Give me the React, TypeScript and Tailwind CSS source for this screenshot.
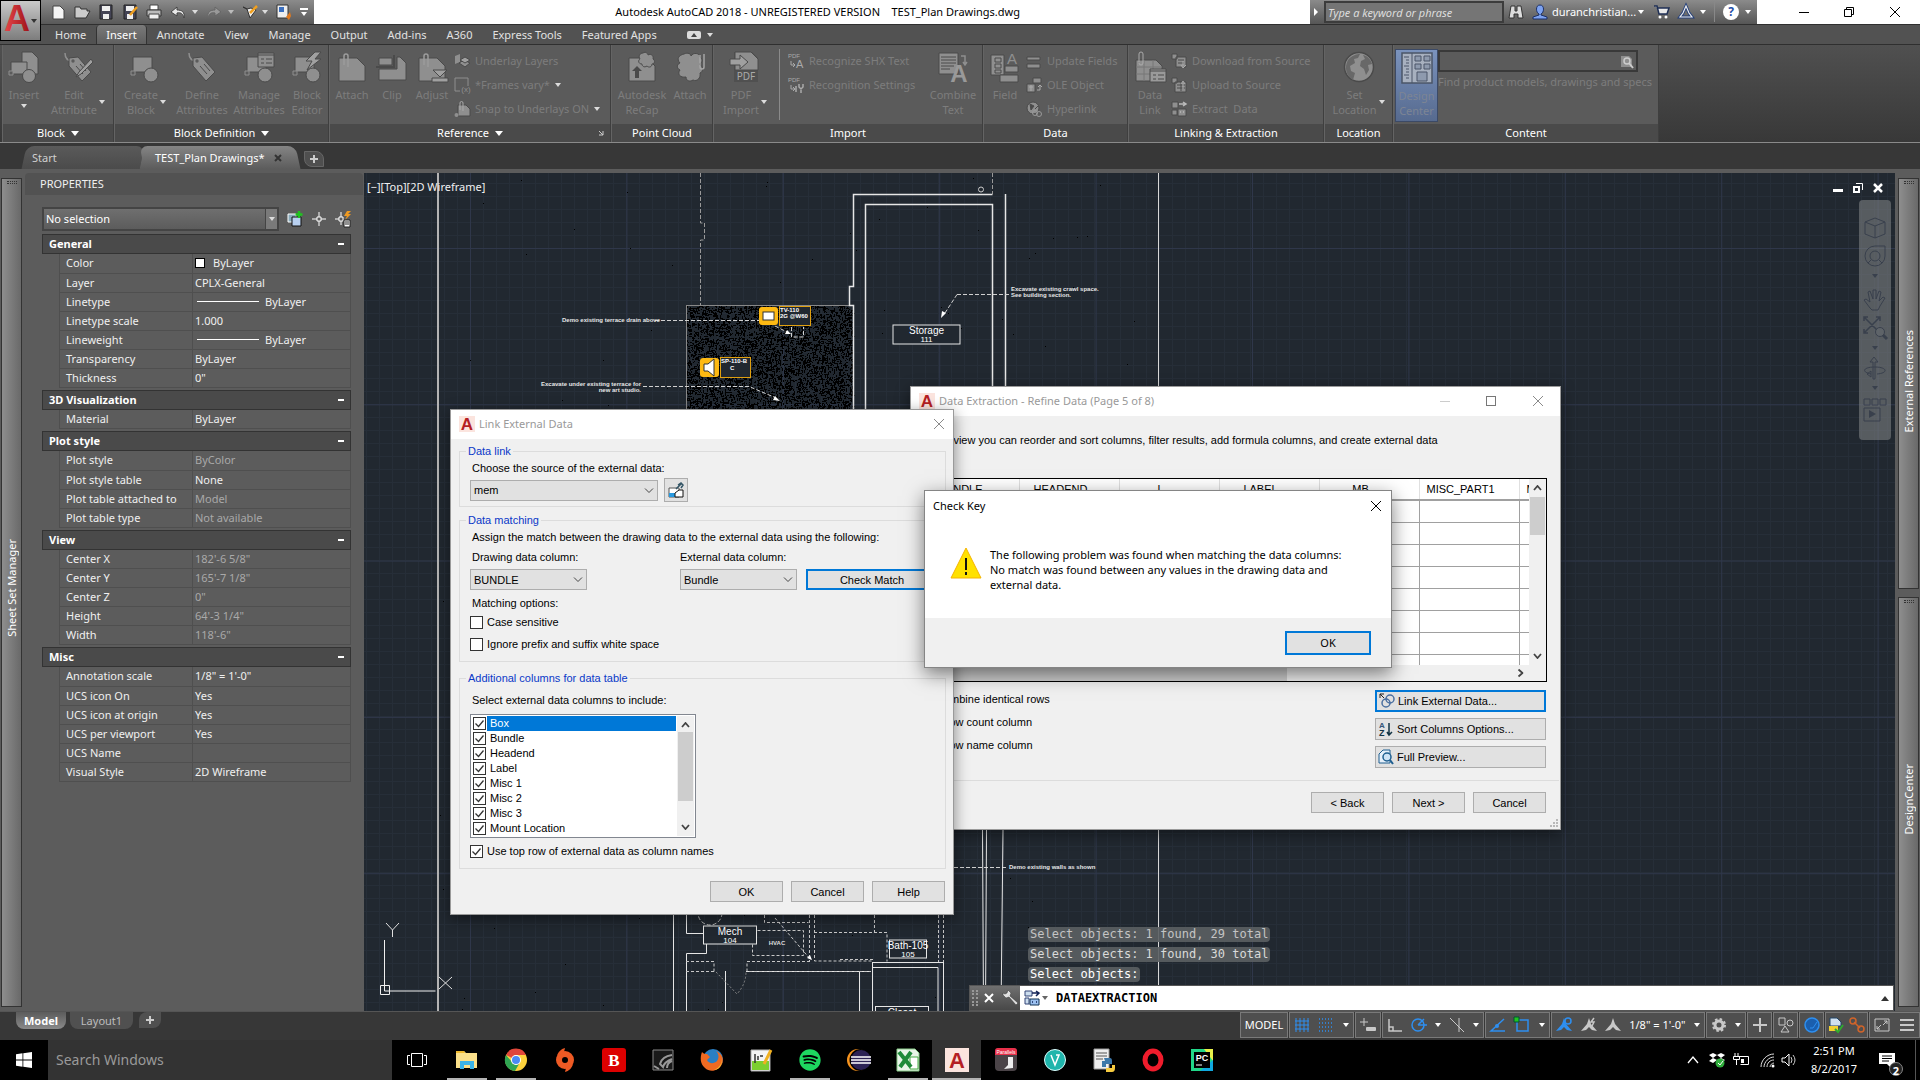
import type { ReactNode } from 'react';
import { FaSpotify } from 'react-icons/fa';

type IconProps = { children: ReactNode; size?: string; box?: string };

const Svg = ({ children, size = 'h-4 w-4', box = '0 0 16 16' }: IconProps) => (
    <svg viewBox={box} className={`${size} shrink-0 overflow-visible`} fill="none" aria-hidden="true">
        {children}
    </svg>
);

const Caret = ({ className = 'text-[#dcdcdc]' }: { className?: string }) => (
    <svg viewBox="0 0 6 4" className={`h-1 w-1.5 shrink-0 ${className}`} aria-hidden="true">
        <path d="M0 0h6L3 4z" fill="currentColor" />
    </svg>
);

const RedA = ({ className = 'h-4 w-4' }: { className?: string }) => (
    <svg viewBox="0 0 16 16" className={`${className} shrink-0 overflow-visible`} aria-hidden="true">
        <rect width="16" height="16" fill="#fbe4de" />
        <text x="8" y="14" textAnchor="middle" fontFamily="Liberation Sans, sans-serif" fontWeight="bold" fontSize="17" fill="#b51f24">A</text>
    </svg>
);

const CloseX = ({ className = 'text-[#8a8a8a]' }: { className?: string }) => (
    <svg viewBox="0 0 12 12" className={`h-3 w-3 ${className}`} aria-hidden="true">
        <path d="M1 1l10 10M11 1L1 11" stroke="currentColor" fill="none" />
    </svg>
);

/* ---------- ribbon icons ---------- */

const F = '#8f8f8f';
const D = '#4a4a4a';

const Tag = () => (
    <g>
        <path d="M3 2c0 6 3 8 8 8" stroke={F} strokeWidth="1.5" />
        <path d="M7 7l9-1 13 15-9 9L7 15z" fill={F} stroke={D} />
        <circle cx="11" cy="10" r="1.7" fill="#5b5b5b" />
        <path d="M14 15l7 8M18 13l6 7" stroke={D} />
    </g>
);

const Shapes = () => (
    <g>
        <path d="M4 6h19v15H4z" fill={F} stroke={D} />
        <path d="M2 20h4v4H2z" fill="#5b5b5b" stroke={F} />
        <circle cx="22" cy="24" r="7" fill={F} stroke={D} />
    </g>
);

const Sheet = () => <path d="M3 7h18l8 8v15H3z" fill={F} stroke={D} />;
const Clip = () => <path d="M8 14V5a2 2 0 014 0v11" stroke="#9c9c9c" strokeWidth="1.5" />;
const Cloud = () => (
    <path d="M10 3c4-2 7 0 7 2 2-4 9-3 9 1 4 3 1 7-1 7 5 3 4 8 1 9 1 5-3 9-7 7-3 2-7 1-7-3-6 1-9-3-6-7-4-2-3-6 0-7-4-4-1-8 4-9z" fill={F} stroke={D} />
);

const bigIcons: Record<string, ReactNode> = {
    insert: <><path d="M14 1h10l6 6v16H14z" fill={F} stroke={D} /><path d="M3 11h16v12H3z" fill={F} stroke={D} /><path d="M1 20h4v4H1z" fill="#5b5b5b" stroke={F} /><circle cx="21" cy="25" r="6.5" fill={F} stroke={D} /></>,
    editAttr: <><Tag /><path d="M29 8l-12 13-3 5 5-3L31 11z" fill="#a0a0a0" stroke={D} /></>,
    create: <Shapes />,
    define: <Tag />,
    manage: <><Shapes /><path d="M15 2h16v14H15z" fill={F} stroke={D} /><path d="M15 4h16M18 8h3M18 12h3M23 8h6M23 12h6" stroke={D} /></>,
    editor: <><Shapes /><path d="M24 1l-9 9h6l-5 9 14-11h-6l6-7z" fill="#a0a0a0" stroke={D} /></>,
    attach: <><Sheet /><Clip /></>,
    clip: <><path d="M3 18h18V6h3l6 6v17H3z" fill={F} stroke={D} /><path d="M3 7h13v7H3z" fill={F} stroke={D} /><path d="M0 16h18V4" stroke={D} strokeWidth="2" /></>,
    adjust: <><Sheet /><Clip /><path d="M17 19h14l-7 7zM16 27h16v4H16z" fill="#a0a0a0" stroke={D} /></>,
    recap: <><Sheet /><path d="M17 2c3-2 5 1 5 2 3-2 6 1 5 4 3 2 1 5-1 5 0 3-3 4-5 2-3 2-5 0-5-2-4 0-4-4-2-5-2-3 0-6 3-6z" fill={F} stroke={D} /><path d="M9 27v-7H6l5-5 5 5h-3v7z" fill={D} /></>,
    cloud: <><Cloud /><path d="M26 4v12a2 2 0 004 0V3" stroke="#a5a5a5" strokeWidth="1.5" /></>,
    pdf: <><path d="M5 1h18l6 6v24H5z" fill="#505050" /><path d="M6 1h16l7 7v11H6z" fill={F} stroke={D} /><path d="M1 8h10V4l8 7-8 7v-4H1z" fill="#a0a0a0" stroke={D} /><text x="17" y="29" textAnchor="middle" fontSize="10" fontFamily="Noto Sans, sans-serif" fill="#aaa">PDF</text></>,
    combine: <><path d="M2 2h19v21H2z" fill={F} stroke={D} /><path d="M4 6h15M4 9h15M4 12h15M4 15h13M4 18h9" stroke={D} /><path d="M24 5h4v8M26 11l2 3 2-3" stroke={F} strokeWidth="1.5" /><text x="22" y="31" textAnchor="middle" fontSize="24" fontWeight="bold" fontFamily="Liberation Sans, sans-serif" fill="#999">A</text></>,
    field: <><path d="M2 4h13v20H2z" fill={F} stroke={D} /><path d="M6 7h6v4H6zM6 13h6v4H6zM6 19h6v3H6z" stroke={D} /><path d="M16 15h13v6H16zM11 24h18v7H11z" fill={F} stroke={D} /><text x="23" y="13" textAnchor="middle" fontSize="15" fontFamily="Liberation Sans, sans-serif" fill={F}>A</text></>,
    link: <><path d="M2 9h20l6 6v15H2z" fill={F} stroke={D} /><path d="M2 16h26M2 23h26M10 9v21M19 9v21" stroke="#777" /><path d="M16 18h16v13H16z" fill="#9a9a9a" stroke={D} /><path d="M16 20h16M19 24h3M19 28h3M24 24h6M24 28h6" stroke={D} /><path d="M5 11V3a2 2 0 014 0v9a2 2 0 01-4 0" stroke="#aaa" /></>,
    globe: <><circle cx="16" cy="16" r="14.5" fill={F} stroke={D} strokeWidth="1.5" /><path d="M5 9c4-5 9-6 12-6l-2 4-4 1 1 4-5 3 1 5 4 2-2 7C3 25 1 16 5 9zM20 4c5 1 8 5 9 9l-4 1 1 5-3 5-2-6-4-3 1-5 4-2z" fill="#686868" /></>,
    design: <><path d="M1 1h30v30H1z" fill="#a7b0bf" stroke="#4b5568" strokeWidth="1.5" /><path d="M11 1v30M3 5h5M5 8h3M5 11h3M3 14h5M5 17h3M5 20h3M3 23h5M5 26h3" stroke="#4b5568" /><path d="M14 4h6v5h-6zM23 4h6v5h-6zM14 12h6v5h-6zM23 12h6v5h-6zM16 20h10v9H16z" stroke="#4b5568" fill="#8e9aae" /></>,
};

const smallIcons: Record<string, ReactNode> = {
    layers: <><path d="M1 3l5-2v8l-5 2z" fill={F} /><path d="M5 10l5-3 6 3-5 4z" fill={F} stroke={D} /><path d="M6 7l5-3 5 3-5 3z" fill="#a0a0a0" stroke={D} /></>,
    frames: <><path d="M6 14H1V1h13v8" stroke={F} /><text x="12" y="15" textAnchor="middle" fontSize="8" fontFamily="Liberation Sans, sans-serif" fill={F}>(x)</text></>,
    snap: <><path d="M4 4h8l4 4v7H4z" fill={F} stroke={D} /><path d="M6 9V2a1 1 0 013 0v8" stroke="#aaa" /><circle cx="2.5" cy="14" r="2" fill={F} /></>,
    shx: <><text x="0" y="5" fontSize="6" fontFamily="Liberation Sans, sans-serif" fill="#aaa">PDF</text><path d="M3 8v4h3M5 10l2 2-2 2" stroke="#aaa" /><text x="8" y="15" fontSize="11" fontFamily="Liberation Sans, sans-serif" fill="#aaa">A</text></>,
    recog: <><text x="0" y="5" fontSize="6" fontFamily="Liberation Sans, sans-serif" fill="#aaa">PDF</text><path d="M3 8v4h3M5 10l2 2-2 2" stroke="#aaa" /><path d="M8 15V9M13 16v-5M11 7v3l2 2 2-2V7" stroke="#aaa" strokeWidth="1.5" /></>,
    update: <path d="M1 4h13v3H1zM1 11h13v4H1z" fill={F} stroke={D} />,
    ole: <><path d="M7 1h8v5H7zM1 7h8v8H1z" fill={F} stroke={D} /><path d="M3 10h4M5 8v6M11 13h3V9M12 10l2-2 2 2" stroke="#aaa" /></>,
    hyper: <><circle cx="7" cy="7" r="6" fill={F} stroke={D} /><path d="M4 3l4 2-3 4zM9 8l3-3" fill={D} stroke={D} /><circle cx="9" cy="12" r="2.5" stroke="#999" /><circle cx="13" cy="13" r="2.5" stroke="#999" /></>,
    down: <><path d="M1 1h5v5H1zM5 4h10v10H5z" fill={F} stroke={D} /><path d="M7 7h6M7 10h6" stroke={D} /><path d="M12 8v6M10 12l2 3 3-3" stroke="#aaa" /></>,
    up: <><path d="M1 1h5v5H1zM4 5h11v10H4z" fill={F} stroke={D} /><path d="M6 8h8M6 11h8M10 4v10" stroke={D} /><path d="M12 12V5M10 7l2-3 2 3" stroke="#aaa" /></>,
    extract: <><path d="M1 1h6v6H1zM1 9h5v5H1zM7 8h8v7H7z" fill={F} stroke={D} /><path d="M9 11h1M12 11h1M8 3h6M12 1l3 2-3 2" stroke="#bbb" strokeWidth="1.5" /></>,
};

type BigProps = { icon: string; lines: string[]; width: string; caret?: boolean; tone?: string };

const BigButton = ({ icon, lines, width, caret, tone = 'text-[#7d7d7d]' }: BigProps) => (
    <button type="button" className={`flex shrink-0 flex-col items-center pt-1.5 ${width} ${tone}`}>
        <Svg box="0 0 32 32" size="h-8 w-8">{bigIcons[icon]}</Svg>
        <span className={`mt-1 flex items-center justify-center gap-0.5 ${lines.length === 1 ? 'flex-col' : ''}`}>
            <span className="flex flex-col items-center leading-[15px] whitespace-nowrap">
                {lines.map((l) => <span key={l}>{l}</span>)}
            </span>
            {caret && <Caret />}
        </span>
    </button>
);

const SmallRows = ({ rows }: { rows: [string, string, boolean?][] }) => (
    <div className="flex flex-col pt-1 text-[#7d7d7d]">
        {rows.map(([icon, label, caret]) => (
            <button key={label} type="button" className="flex h-6 items-center gap-[5px] whitespace-pre">
                <Svg>{smallIcons[icon]}</Svg>
                {label}
                {caret && <Caret />}
            </button>
        ))}
    </div>
);

type PanelProps = { title: string; width: string; more?: boolean; launcher?: boolean; children: ReactNode };

const Panel = ({ title, width, more, launcher, children }: PanelProps) => (
    <section className={`flex shrink-0 flex-col border-r border-[#3f3f3f] ${width}`}>
        <div className="flex h-[79px] border-l border-[#646464] bg-[#5b5b5b]">{children}</div>
        <h2 className="relative flex h-[18px] items-center justify-center gap-1.5 border-l border-[#646464] bg-[#4a4a4a] text-white">
            {title}
            {more && <svg viewBox="0 0 8 5" className="h-[5px] w-2"><path d="M0 0h8L4 5z" fill="#fff" /></svg>}
            {launcher && <svg viewBox="0 0 6 6" className="absolute right-1.5 h-1.5 w-1.5"><path d="M1 1l4 4M5 1v4H1" stroke="#ccc" fill="none" /></svg>}
        </h2>
    </section>
);

/* ---------- title bar ---------- */

const quickAccess: [string, ReactNode][] = [
    ['New', <path key="n" d="M3 2h7l4 4v9H3z" fill="#f4f4f4" stroke="#444" />],
    ['Open', <path key="o" d="M1 14V3h5l1 2h6v2h3l-4 7z" fill="#ccc" stroke="#333" />],
    ['Save', <><path d="M2 1h12v14H2z" fill="#445" stroke="#222" /><path d="M4 2h8v5H4zM5 10h6v5H5z" fill="#eee" /></>],
    ['Save As', <><path d="M2 1h12v14H2z" fill="#445" stroke="#222" /><path d="M4 2h8v5H4zM5 10h6v5H5z" fill="#eee" /><path d="M15 3l-7 8" stroke="#f0a020" strokeWidth="2.5" /></>],
    ['Plot', <><path d="M4 1h8v5H4z" fill="#fff" stroke="#444" /><path d="M1 6h14v6H1z" fill="#bbb" stroke="#333" /><path d="M3 10h10v5H3z" fill="#eee" stroke="#444" /></>],
];

const TitleBar = () => (
    <header className="flex h-6 bg-white pl-[41px] text-[11px]">
        <div className="flex w-[273px] items-center gap-2 bg-linear-to-b from-[#8b8b8b] to-[#595959] pl-[9px]">
            {quickAccess.map(([name, art]) => (
                <button key={name} type="button" aria-label={name}><Svg>{art}</Svg></button>
            ))}
            <button type="button" aria-label="Undo" className="flex items-center gap-1.5">
                <Svg><path d="M7 3L1 8l6 4V9c4-1 6 1 7 5 1-6-2-8-7-8z" fill="#e8e8e8" stroke="#444" /></Svg>
                <Caret />
            </button>
            <button type="button" aria-label="Redo" className="flex items-center gap-1.5">
                <Svg><path d="M9 3l6 5-6 4V9c-4-1-6 1-7 5-1-6 2-8 7-8z" fill="#999" stroke="#666" /></Svg>
                <Caret className="text-[#bbb]" />
            </button>
            <button type="button" aria-label="Workspace" className="flex items-center gap-1">
                <Svg><path d="M1 3l4 2 3 9 6-8-5-2-4 1z" fill="#eee" stroke="#333" /><path d="M15 2L8 9" stroke="#f0a020" strokeWidth="2.5" /></Svg>
                <Caret />
            </button>
            <button type="button" aria-label="Match properties">
                <Svg><path d="M1 1h11v13H1z" fill="#eee" stroke="#333" /><path d="M3 3h5v5H3z" fill="#3a6fc0" /><path d="M14 8l-4 5 3 3 2-4z" fill="#e07a20" /></Svg>
            </button>
            <button type="button" aria-label="Customize" className="flex flex-col items-center gap-0.5">
                <span className="h-0.5 w-2 bg-white" /><Caret className="text-white" />
            </button>
        </div>
        <h1 className="flex-1 self-center pr-[68px] text-right whitespace-pre text-black">
            {'Autodesk AutoCAD 2018 - UNREGISTERED VERSION    TEST_Plan Drawings.dwg'}
        </h1>
        <div className="ml-[222px] flex w-[447px] items-center bg-linear-to-b from-[#8b8b8b] to-[#565656] pl-1 text-white">
            <svg viewBox="0 0 4 8" className="mr-1.5 h-2 w-1"><path d="M0 0l4 4-4 4z" fill="#fff" /></svg>
            <input aria-label="Search" placeholder="Type a keyword or phrase" className="h-[22px] w-[180px] border-2 border-[#3c3c3c] bg-[#757575] px-0.5 italic placeholder:text-[#dedede]" />
            <Svg size="ml-1 h-4 w-4"><path d="M3 2h4v5h2V2h4l2 12h-5v-4H6v4H1z" fill="#ddd" stroke="#333" /></Svg>
            <Svg size="ml-2 h-4 w-4"><path d="M8 1c5 0 4 8 1 9v1l6 2v2H1v-2l6-2v-1C4 9 3 1 8 1z" fill="#7da2f0" stroke="#1b2f66" /></Svg>
            <a href="#account" className="ml-1 flex items-center gap-0.5">duranchristian...<Caret className="text-white" /></a>
            <Svg size="ml-auto h-4 w-4"><path d="M0 2h3l2 8h8l2-6H4" fill="#e8e8e8" stroke="#1f2f55" strokeWidth="1.5" /><circle cx="6" cy="13" r="1.5" fill="#fff" /><circle cx="12" cy="13" r="1.5" fill="#fff" /></Svg>
            <Svg size="ml-2 h-4 w-4"><path d="M8 2l3 7 3 4H2l3-4z" stroke="#24407c" strokeWidth="3" /><path d="M8 2l3 7 3 4H2l3-4z" stroke="#eee" strokeWidth="1.2" /></Svg>
            <span className="ml-1.5"><Caret className="text-white" /></span>
            <span className="mx-2 h-5 w-px bg-[#888]" />
            <span className="grid h-4 w-4 place-items-center rounded-full bg-white text-xs font-bold text-[#1f4ea8]">?</span>
            <span className="mx-1.5"><Caret className="text-white" /></span>
        </div>
        <div className="flex w-[163px] items-center justify-between pr-[19px] pl-[42px]">
            <button type="button" aria-label="Minimize" className="h-px w-2.5 bg-black" />
            <button type="button" aria-label="Restore"><svg viewBox="0 0 10 10" className="h-2.5 w-2.5" fill="none" stroke="#000"><path d="M.5 2.5h7v7h-7zM2.5 2.5v-2h7v7h-2" /></svg></button>
            <button type="button" aria-label="Close"><CloseX className="text-black" /></button>
        </div>
    </header>
);

const tabs = ['Home', 'Insert', 'Annotate', 'View', 'Manage', 'Output', 'Add-ins', 'A360', 'Express Tools', 'Featured Apps'];

const Ribbon = () => (
    <div className="text-[11px]">
        <nav className="flex h-[21px] items-stretch border-y border-[#2f2f2f] bg-[#525252] pl-[45px]">
            {tabs.map((t) => (
                <a
                    key={t}
                    href={`#${t}`}
                    className={`flex items-center border-x px-[9px] ${t === 'Insert' ? 'rounded-t-sm border-[#333] bg-linear-to-b from-[#7a7a7a] to-[#5f5f5f] text-white' : 'border-transparent text-[#e2e2e2]'}`}
                >
                    {t}
                </a>
            ))}
            <button type="button" aria-label="Ribbon display" className="ml-5 flex items-center gap-1.5">
                <svg viewBox="0 0 14 8" className="h-2 w-3.5"><rect width="14" height="8" rx="2" fill="#dcdcdc" /><path d="M4 6l3-4 3 4z" fill="#444" /></svg>
                <Caret />
            </button>
        </nav>
        <div className="flex h-[98px] border-b border-[#8a8a8a] bg-linear-to-b from-[#505050] to-[#383838] pl-0.5">
            <Panel title="Block" width="w-[112px]" more>
                <BigButton icon="insert" lines={['Insert']} width="w-[42px]" caret />
                <BigButton icon="editAttr" lines={['Edit', 'Attribute']} width="w-[66px]" caret />
            </Panel>
            <Panel title="Block Definition" width="w-[215px]" more>
                <BigButton icon="create" lines={['Create', 'Block']} width="w-[60px]" caret />
                <BigButton icon="define" lines={['Define', 'Attributes']} width="w-[54px]" />
                <BigButton icon="manage" lines={['Manage', 'Attributes']} width="w-[60px]" />
                <BigButton icon="editor" lines={['Block', 'Editor']} width="w-9" />
            </Panel>
            <Panel title="Reference" width="w-[282px]" more launcher>
                <BigButton icon="attach" lines={['Attach']} width="w-11" />
                <BigButton icon="clip" lines={['Clip']} width="w-9" />
                <BigButton icon="adjust" lines={['Adjust']} width="w-11" />
                <SmallRows rows={[['layers', 'Underlay Layers'], ['frames', '*Frames vary*', true], ['snap', 'Snap to Underlays ON', true]]} />
            </Panel>
            <Panel title="Point Cloud" width="w-[102px]">
                <BigButton icon="recap" lines={['Autodesk', 'ReCap']} width="w-[60px]" />
                <BigButton icon="cloud" lines={['Attach']} width="w-9" />
            </Panel>
            <Panel title="Import" width="w-[270px]">
                <BigButton icon="pdf" lines={['PDF', 'Import']} width="w-[62px]" caret />
                <span className="mx-[3px] my-1 mr-2 w-px shrink-0 bg-[#8a8a8a]" />
                <SmallRows rows={[['shx', 'Recognize SHX Text'], ['recog', 'Recognition Settings']]} />
                <div className="ml-auto"><BigButton icon="combine" lines={['Combine', 'Text']} width="w-[58px]" /></div>
            </Panel>
            <Panel title="Data" width="w-[145px]">
                <BigButton icon="field" lines={['Field']} width="w-[42px]" />
                <SmallRows rows={[['update', 'Update Fields'], ['ole', 'OLE Object'], ['hyper', 'Hyperlink']]} />
            </Panel>
            <Panel title="Linking & Extraction" width="w-[196px]">
                <BigButton icon="link" lines={['Data', 'Link']} width="w-[42px]" />
                <SmallRows rows={[['down', 'Download from Source'], ['up', 'Upload to Source'], ['extract', 'Extract  Data']]} />
            </Panel>
            <Panel title="Location" width="w-[69px]">
                <BigButton icon="globe" lines={['Set', 'Location']} width="w-[67px]" caret />
            </Panel>
            <Panel title="Content" width="w-[266px]">
                <div className="mt-1 mb-0.5 ml-px flex h-[73px] w-[43px] shrink-0 justify-center border border-[#3c4a66] bg-linear-to-b from-[#7b93bd] to-[#566a8f]">
                    <div className="-mt-1"><BigButton icon="design" lines={['Design', 'Center']} width="w-10" tone="text-[#7d8594]" /></div>
                </div>
                <div className="flex flex-col pt-[5px]">
                    <div className="flex h-[22px] w-[200px] items-center border-2 border-[#393939] pr-0.5">
                        <input aria-label="Find content" className="min-w-0 flex-1 bg-transparent" />
                        <Svg><path d="M3 3h8l3 3v8H3z" fill="#8f8f8f" /><circle cx="9" cy="8" r="3" stroke="#ccc" strokeWidth="1.5" /><path d="M11 10l4 5" stroke="#ccc" strokeWidth="2" /></Svg>
                    </div>
                    <p className="pt-0.5 whitespace-nowrap text-[#7d7d7d]">Find product models, drawings and specs</p>
                </div>
            </Panel>
        </div>
    </div>
);

const FileTabs = () => (
    <div className="flex h-[30px] items-end border-b-4 border-[#5c5c5c] bg-[#373737] pl-6 text-[11px]">
        <a href="#start" className="relative isolate flex h-[23px] w-[118px] items-center pl-2 text-[#cfcfcf] before:absolute before:inset-0 before:-z-10 before:-skew-x-12 before:rounded-t-lg before:bg-linear-to-b before:from-[#5a5a5a] before:to-[#4b4b4b]">Start</a>
        <a href="#drawing" className="relative isolate flex h-[23px] w-[156px] items-center justify-between pr-4 pl-[13px] text-white before:absolute before:inset-0 before:-z-10 before:skew-x-12 before:rounded-t-lg before:bg-linear-to-b before:from-[#858585] before:to-[#5c5c5c] after:absolute after:inset-y-0 after:left-0 after:-z-10 after:w-10 after:-skew-x-12 after:rounded-tl-lg after:bg-linear-to-b after:from-[#858585] after:to-[#5c5c5c]">
            TEST_Plan Drawings*
            <svg viewBox="0 0 8 8" className="h-2 w-2"><path d="M1 1l6 6M7 1L1 7" stroke="#333" strokeWidth="2" /></svg>
        </a>
        <button type="button" aria-label="New tab" className="mb-0.5 ml-1.5 grid h-4 w-5 place-items-center rounded-tr-lg rounded-bl-lg border border-[#666] bg-[#4f4f4f]">
            <svg viewBox="0 0 8 8" className="h-2 w-2"><path d="M4 0v8M0 4h8" stroke="#ccc" strokeWidth="2" /></svg>
        </button>
    </div>
);

/* ---------- palettes ---------- */

const SideBar = ({ label, className }: { label: string; className: string }) => (
    <div className={`flex w-[21px] flex-col items-center border border-[#333] bg-linear-to-r from-[#8e8e8e] to-[#696969] text-[11px] text-white ${className}`}>
        <span className="mt-0.5 h-[3px] w-2.5 border-y border-dotted border-[#333]" />
        <span className="rotate-180 [writing-mode:vertical-rl]">{label}</span>
    </div>
);

type Row = { name: string; value: string; dim?: boolean; mark?: 'swatch' | 'line' };

const sections: { title: string; rows: Row[] }[] = [
    {
        title: 'General',
        rows: [
            { name: 'Color', value: 'ByLayer', mark: 'swatch' },
            { name: 'Layer', value: 'CPLX-General' },
            { name: 'Linetype', value: 'ByLayer', mark: 'line' },
            { name: 'Linetype scale', value: '1.000' },
            { name: 'Lineweight', value: 'ByLayer', mark: 'line' },
            { name: 'Transparency', value: 'ByLayer' },
            { name: 'Thickness', value: '0"' },
        ],
    },
    { title: '3D Visualization', rows: [{ name: 'Material', value: 'ByLayer' }] },
    {
        title: 'Plot style',
        rows: [
            { name: 'Plot style', value: 'ByColor', dim: true },
            { name: 'Plot style table', value: 'None' },
            { name: 'Plot table attached to', value: 'Model', dim: true },
            { name: 'Plot table type', value: 'Not available', dim: true },
        ],
    },
    {
        title: 'View',
        rows: [
            { name: 'Center X', value: '182\'-6 5/8"', dim: true },
            { name: 'Center Y', value: '165\'-7 1/8"', dim: true },
            { name: 'Center Z', value: '0"', dim: true },
            { name: 'Height', value: '64\'-3 1/4"', dim: true },
            { name: 'Width', value: '118\'-6"', dim: true },
        ],
    },
    {
        title: 'Misc',
        rows: [
            { name: 'Annotation scale', value: '1/8" = 1\'-0"' },
            { name: 'UCS icon On', value: 'Yes' },
            { name: 'UCS icon at origin', value: 'Yes' },
            { name: 'UCS per viewport', value: 'Yes' },
            { name: 'UCS Name', value: '' },
            { name: 'Visual Style', value: '2D Wireframe' },
        ],
    },
];

const Properties = () => (
    <aside className="flex w-[338px] shrink-0 flex-col text-[11px] text-[#f0f0f0]">
        <h2 className="flex h-[22px] items-center rounded-t bg-[#525252] pl-[15px] leading-4">PROPERTIES</h2>
        <div className="mt-3 flex items-center pl-[17px]">
            <div className="relative h-6 w-[237px]">
                <select aria-label="Selection" className="h-6 w-full appearance-none border-2 border-[#444] bg-linear-to-b from-[#6f6f6f] to-[#5c5c5c] pl-0.5 text-[11px] text-white">
                    <option>No selection</option>
                </select>
                <span className="pointer-events-none absolute inset-y-0.5 right-0.5 grid w-3 place-items-center border-l border-[#444] bg-[#7a7a7a]"><Caret /></span>
            </div>
            <button type="button" aria-label="Toggle pickadd" className="ml-2"><Svg><path d="M1 3h8v8H1z" fill="#8ab" stroke="#fff" /><path d="M5 6h9v9H5z" fill="#b8d0f0" stroke="#111" /><path d="M12 0v7M8.500 3.500h7" stroke="#1fc41f" strokeWidth="2.5" /></Svg></button>
            <button type="button" aria-label="Select objects" className="ml-2"><Svg><path d="M8 1v5M8 10v5M1 8h5M10 8h5M6 6h4v4H6z" stroke="#fff" /></Svg></button>
            <button type="button" aria-label="Quick select" className="ml-2"><Svg><path d="M6 1v5M6 10v4M0 8h4M4 6h4v4H4z" stroke="#fff" /><path d="M12 0l-3 5h3l-2 4 6-6h-3l3-3z" fill="#f09a20" /><path d="M9 9h6v7H9z" fill="#fff" stroke="#222" /><path d="M10 11h4M10 13h4" stroke="#222" /></Svg></button>
        </div>
        <div className="mt-[3px] flex flex-col gap-0.5 pl-[17px]">
            {sections.map((s) => (
                <section key={s.title} className="w-[309px]">
                    <h3 className="flex h-5 items-center justify-between border border-[#333] bg-[#4a4a4a] px-1.5 text-[11px] font-bold text-white">
                        {s.title}
                        <span className="h-0.5 w-1.5 bg-white" />
                    </h3>
                    <table className="ml-[17px] w-[292px] table-fixed border-collapse text-[11px]">
                        <tbody>
                            {s.rows.map((r) => (
                                <tr key={r.name} className="h-[19px]">
                                    <th scope="row" className="w-[133px] border border-t-0 border-[#4f4f4f] p-0 pl-1.5 text-left leading-[18px] font-normal">{r.name}</th>
                                    <td className={`border border-t-0 border-[#4f4f4f] p-0 pl-0.5 leading-[18px] ${r.dim ? 'text-[#a9a9a9]' : ''}`}>
                                        <span className="flex h-[18px] items-center">
                                            {r.mark === 'swatch' && <span className="mr-2 h-2.5 w-2.5 border border-black bg-white" />}
                                            {r.mark === 'line' && <span className="mr-1.5 ml-0.5 h-px w-[62px] bg-white" />}
                                            {r.value}
                                        </span>
                                    </td>
                                </tr>
                            ))}
                        </tbody>
                    </table>
                </section>
            ))}
        </div>
    </aside>
);

/* ---------- drawing ---------- */

// small seeded generator so the hatch looks the same on every render
const speckle = (seed: number, count: number, x: number, y: number, w: number, h: number, long = false) => {
    let s = seed;
    const next = () => {
        s = (s * 16807) % 2147483647;
        return s / 2147483647;
    };
    let d = '';
    for (let i = 0; i < count; i++) {
        const px = Math.floor(x + next() * w);
        const py = Math.floor(y + next() * h);
        const len = long ? 1 + Math.floor(next() * 3) : 1;
        d += next() > 0.5 ? `M${px} ${py}h${len}v1h-${len}z` : `M${px} ${py}h1v${len}h-1z`;
    }
    return d;
};

const hatch = speckle(7, 5200, 687, 306, 166, 110, true);
const dust = speckle(21, 160, 440, 175, 700, 840);

const Note = ({ x, y, children, end }: { x: number; y: number; children: string; end?: boolean }) => (
    <text x={x} y={y} fontSize="6" fontWeight="bold" fill="#e6e6e6" textAnchor={end ? 'end' : 'start'}>{children}</text>
);

const RoomTag = ({ x, y, w, h, name, no }: { x: number; y: number; w: number; h: number; name: string; no: string }) => (
    <g>
        <rect x={x} y={y} width={w} height={h} fill="#212830" stroke="#e6e6e6" />
        <text x={x + w / 2} y={y + 9} fontSize="10" textAnchor="middle" fill="#fff">{name}</text>
        <text x={x + w / 2} y={y + 17} fontSize="8" textAnchor="middle" fill="#fff">{no}</text>
    </g>
);

const Plan = () => (
    <svg className="absolute inset-0 h-full w-full" fontFamily="Liberation Sans, sans-serif" fill="none">
        <defs>
            <pattern id="minor" width="13" height="13" x="2" y="10" patternUnits="userSpaceOnUse"><path d="M.5 0v13M0 .5h13" stroke="#262e38" /></pattern>
            <pattern id="major" width="156.400" height="156.300" x="106" y="75" patternUnits="userSpaceOnUse"><path d="M.5 0v157M0 .5h157" stroke="#2f374a" /></pattern>
        </defs>
        <rect width="100%" height="100%" fill="#212830" />
        <rect width="100%" height="100%" fill="url(#minor)" />
        <rect width="100%" height="100%" fill="url(#major)" />
        <g transform="translate(-364 -173)">
            <path d={dust} fill="#000" />
            <path d="M438 173v840" stroke="#b4b4b4" strokeWidth="2" />
            <path d="M1158.500 173v840" stroke="#d8d8d8" />
            <path d="M700.500 173v50h4v17h-4v65M992.500 173v21" stroke="#999" strokeDasharray="4 2" />
            <rect x="686.500" y="305.500" width="167" height="120" stroke="#888" />
            <path d={hatch} fill="#000" />
            <path d="M853.500 420V305.500h-4V286.500h4V194.500h139M865.500 420V204.500h127V420M1005.500 194v240" stroke="#e6e6e6" strokeWidth="1.5" />
            <circle cx="981" cy="189.500" r="2.500" stroke="#ccc" />
            <path d="M655 320.500h104M643 386.500h106l26 11M957 294.500h53M957 294.500l-13 20M775 326l12 6M791.500 327v10h12v-10M954 867.500h53" stroke="#d0d0d0" strokeDasharray="4 2" />
            <path d="M780 401l-7-1 2-4zM941 318l1-7 4 2zM791 334l-6 0 2-4z" fill="#fff" />
            <Note x={562} y={322}>Demo existing terrace drain above</Note>
            <Note x={641} y={386} end>Excavate under existing terrace for</Note>
            <Note x={641} y={392} end>new art studio.</Note>
            <Note x={1011} y={291}>Excavate existing crawl space.</Note>
            <Note x={1011} y={297}>See building section.</Note>
            <Note x={1009} y={869}>Demo existing walls as shown</Note>
            <RoomTag x={893} y={325} w={67} h={19} name="Storage" no="111" />

            <rect x="759" y="307" width="19" height="18" rx="3" fill="#fdb913" />
            <rect x="763" y="312" width="11" height="8" fill="#fff" stroke="#333" />
            <rect x="779.500" y="306.500" width="31" height="19" fill="#212830" stroke="#e0a010" />
            <text x="780" y="312" fontSize="6" fontWeight="bold" fill="#fff">TV-110</text>
            <text x="780" y="318" fontSize="6" fontWeight="bold" fill="#fff">2G @W60</text>
            <rect x="700" y="358" width="19" height="19" rx="3" fill="#fdb913" />
            <path d="M704 364h4l6-5v17l-6-5h-4z" fill="#fff" stroke="#333" />
            <rect x="720.500" y="357.500" width="30" height="20" fill="#212830" stroke="#e0a010" />
            <text x="721" y="363" fontSize="6" fontWeight="bold" fill="#fff">SP-110-B</text>
            <text x="730" y="370" fontSize="6" fontWeight="bold" fill="#fff">C</text>

            <path d="M673.500 900v112M686.500 900v33.500h17M706.500 944v9.500h-20V1012M725.500 971v41M746 971.500h125M859.500 972v40M872.500 1012V962.500M872 962.500h71M872 967.500h66V1012M943.500 962v50M982.500 829l1 183M986.500 829l-1 183M1003 829l-2 183" stroke="#e6e6e6" />
            <path d="M764.500 900v22.500h44M752.500 930.500h51v25h-51zM809.500 900v61M814.500 900v61h58M686 961.500h28v10M686 971.500h28M810 961.500h-63v10h124M814 932.500h73v29M874.500 900v32M938.500 900v62M943.500 900v62M775 918l36 42M840 959.500h35" stroke="#c8c8c8" strokeDasharray="3 2" />
            <path d="M716 972l21 22q9-10 9-22" stroke="#888" strokeDasharray="2 2" />
            <circle cx="710" cy="913" r="12" stroke="#bbb" strokeDasharray="4 2" />
            <path d="M812 960l-5-2 3-3z" fill="#fff" />
            <text x="777" y="945" fontSize="6" fontWeight="bold" textAnchor="middle" fill="#ddd">HVAC</text>
            <RoomTag x={703.5} y={926} w={53} h={18} name="Mech" no="104" />
            <RoomTag x={889.5} y={940} w={37} h={18} name="Bath-105" no="105" />
            <RoomTag x={875.5} y={1006.5} w={53} h={18} name="Closet" no="107" />

            <path d="M384.500 940v51h51M380.500 985.500h9v9h-9z" stroke="#f0f0f0" />
            <path d="M386 923l6.500 7 6.500-7M392.500 930v7M439 977l13 12M452 977l-13 12" stroke="#e0e0e0" />
        </g>
    </svg>
);

const NavBar = () => (
    <div className="absolute top-[27px] right-1 flex h-60 w-8 flex-col items-center rounded bg-[#85898b]/60 pt-4 text-[#3c4350] opacity-90">
        <Svg box="0 0 24 24" size="h-6 w-6"><path d="M2 6l10-4 10 4v12l-10 4-10-4zM2 6l10 4 10-4M12 10v12" stroke="currentColor" /></Svg>
        <Svg box="0 0 24 24" size="mt-1 h-6 w-6"><path d="M12 2h10v10a10 10 0 11-10-10z" stroke="currentColor" /><circle cx="12" cy="12" r="5" stroke="currentColor" /><path d="M8 16l-3 3M16 16l3 3" stroke="currentColor" /></Svg>
        <Caret className="mt-1.5 text-[#3c4350]" />
        <Svg box="0 0 24 24" size="mt-2.5 h-6 w-6"><path d="M7 20L1 12l2-1 4 3L5 4l2-1 3 8V2h3v9l3-8 2 1-2 9 4-4 2 1-5 8-2 4H9z" stroke="currentColor" /></Svg>
        <Svg box="0 0 24 24" size="mt-1 h-6 w-6"><path d="M1 1l16 16M17 1L1 17M1 5V1h4M13 1h4v4M1 13v4h4" stroke="currentColor" strokeWidth="1.5" /><circle cx="17" cy="16" r="4.500" stroke="currentColor" fill="#656a6f" /><path d="M20 19l4 4" stroke="currentColor" strokeWidth="3" /></Svg>
        <Caret className="mt-1.5 text-[#3c4350]" />
        <Svg box="0 0 24 24" size="mt-1.5 h-6 w-6"><path d="M10 23V6H7l4-5 4 5h-3v17z" stroke="currentColor" /><path d="M8 18C-2 16 0 11 12 11s14 6 2 7M8 15v6l-4-3z" stroke="currentColor" /></Svg>
        <Caret className="mt-1.5 text-[#3c4350]" />
        <Svg box="0 0 24 24" size="mt-2 h-6 w-6"><path d="M1 1h6v6H1zM9 1h6v6H9zM17 1h6v6h-6zM1 10h16v13H1z" stroke="currentColor" /><path d="M6 12l7 4-7 4z" fill="currentColor" /></Svg>
    </div>
);

const CommandLine = () => (
    <div className="absolute right-px bottom-0 left-[605px] font-['DejaVu_Sans_Mono','Liberation_Mono',monospace] text-xs">
        <div className="mb-[3px] ml-[59px] flex flex-col items-start gap-[5px] leading-[15px]">
            <p className="rounded-sm bg-[#5b5f63]/90 px-0.5 text-[#c4c4c4]">Select objects: 1 found, 29 total</p>
            <p className="rounded-sm bg-[#5b5f63]/90 px-0.5 text-[#dadada]">Select objects: 1 found, 30 total</p>
            <p className="rounded-sm bg-[#5b5f63]/90 px-0.5 text-white">Select objects:</p>
        </div>
        <div className="flex h-[26px] items-center border border-[#555] bg-linear-to-b from-[#707070] to-[#484848]">
            <span className="ml-0.5 h-4 w-1.5 border-x-2 border-dotted border-[#999]" />
            <svg viewBox="0 0 10 10" className="ml-1.5 h-2.5 w-2.5"><path d="M1 1l8 8M9 1L1 9" stroke="#fff" strokeWidth="2" /></svg>
            <Svg size="ml-2 h-4 w-4"><path d="M1 5l3 3 3-1 7 8 2-2-8-7 1-3-3-3-1 3-2 1-2-1z" fill="#e0e0e0" stroke="#333" strokeWidth=".5" /></Svg>
            <label className="ml-0.5 flex h-full flex-1 items-center bg-white pl-1">
                <Svg><path d="M1 1h7v5H1zM1 8h4v6H1z" fill="#cde" stroke="#347" /><path d="M6 9h9v6H6z" fill="#9bc0f0" stroke="#135" /><path d="M8 12h1M12 12h1M8 3h6M12 1l3 2-3 3" stroke="#125" strokeWidth="1.500" /></Svg>
                <Caret className="mx-0.5 text-[#666]" />
                <input aria-label="Command" defaultValue="DATAEXTRACTION" className="min-w-0 flex-1 bg-transparent pl-1.5 font-bold text-black" />
                <svg viewBox="0 0 8 5" className="mr-1 h-[5px] w-2"><path d="M0 5l4-5 4 5z" fill="#333" /></svg>
            </label>
        </div>
    </div>
);

const Canvas = () => (
    <main className="relative min-w-0 flex-1 overflow-hidden bg-[#212830]">
        <Plan />
        <p className="absolute top-1.5 left-[3px] text-[11px] text-[#f0f0f0]">[−][Top][2D Wireframe]</p>
        <div className="absolute top-2.5 right-3 flex h-2.5 items-end gap-2.5 text-white">
            <button type="button" aria-label="Minimize drawing" className="mb-px h-[3px] w-2.5 bg-white" />
            <button type="button" aria-label="Restore drawing"><svg viewBox="0 0 10 10" className="h-2.5 w-2.5" fill="none" stroke="#fff"><path d="M1 4h5v5H1z" strokeWidth="2" /><path d="M3 .5h6.500V7" /></svg></button>
            <button type="button" aria-label="Close drawing"><svg viewBox="0 0 10 10" className="h-2.5 w-2.5"><path d="M1 1l8 8M9 1L1 9" stroke="#fff" strokeWidth="2.500" /></svg></button>
        </div>
        <NavBar />
        <CommandLine />
    </main>
);

/* ---------- dialogs ---------- */

const Btn = ({ children, width = 'w-[73px]', focus }: { children: ReactNode; width?: string; focus?: boolean }) => (
    <button type="button" className={`flex h-[21px] items-center justify-center bg-[#e1e1e1] ${width} ${focus ? 'border-2 border-[#0078d7]' : 'border border-[#adadad]'}`}>{children}</button>
);

const Check = ({ label, on, tight, picked }: { label: string; on?: boolean; tight?: boolean; picked?: boolean }) => (
    <label className={`flex items-center whitespace-nowrap ${tight ? 'h-[15px]' : 'h-3.5 gap-1'}`}>
        <span className="relative h-[13px] w-[13px] shrink-0">
            <input type="checkbox" defaultChecked={on} className="peer block h-[13px] w-[13px] appearance-none border border-[#333] bg-white" />
            <svg viewBox="0 0 13 13" className="pointer-events-none absolute inset-0 hidden peer-checked:block"><path d="M2.500 6.500l3 3 5-6" stroke="#333" strokeWidth="1.300" fill="none" /></svg>
        </span>
        <span className={tight ? `ml-px flex-1 pl-[3px] leading-[15px] ${picked ? 'bg-[#0078d7] text-white' : ''}` : ''}>{label}</span>
    </label>
);

const Combo = ({ id, value, width }: { id: string; value: string; width: string }) => (
    <div className={`relative h-[21px] ${width}`}>
        <select id={id} className="block h-[21px] w-full appearance-none border border-[#adadad] bg-[#e1e1e1] pl-[3px] text-black">
            <option>{value}</option>
        </select>
        <svg viewBox="0 0 10 6" className="pointer-events-none absolute top-2 right-1 h-1.5 w-2.5"><path d="M1 .5l4 4 4-4" stroke="#444" fill="none" /></svg>
    </div>
);

const Scroll = ({ up }: { up?: boolean }) => (
    <svg viewBox="0 0 9 6" className="h-1.5 w-[9px]"><path d={up ? 'M1 5l3.500-4L8 5' : 'M1 1l3.500 4L8 1'} stroke="#444" strokeWidth="1.800" fill="none" /></svg>
);

const dialogFont = "font-['Liberation_Sans',Arial,sans-serif] text-[11px] leading-3.5 text-black";
const group = 'border border-[#dcdcdc] px-2.5';
const legend = '-ml-1 px-0.5 text-[#0a38c8]';

const extColumns = ['Box', 'Bundle', 'Headend', 'Label', 'Misc 1', 'Misc 2', 'Misc 3', 'Mount Location'];

const LinkDialog = () => (
    <div role="dialog" aria-label="Link External Data" className={`absolute top-[409px] left-[450px] w-[504px] border border-[#9a9a9a] bg-[#f0f0f0] shadow-[0_4px_14px_rgba(0,0,0,0.45)] ${dialogFont}`}>
        <div className="flex h-[29px] items-center bg-white pr-2 pb-px pl-2 font-['Noto_Sans',sans-serif] text-[#999]">
            <RedA />
            <h2 className="ml-1 flex-1">Link External Data</h2>
            <button type="button" aria-label="Close"><CloseX /></button>
        </div>
        <div className="flex flex-col pt-[5px] pr-[7px] pb-3 pl-2">
            <fieldset className={`${group} pb-1`}>
                <legend className={legend}>Data link</legend>
                <label htmlFor="source" className="mt-[3px] block pl-0.5">Choose the source of the external data:</label>
                <div className="mt-[3px] flex items-center gap-1.5">
                    <Combo id="source" value="mem" width="w-[188px]" />
                    <button type="button" aria-label="Launch Data Link Manager" className="grid h-6 w-6 place-items-center border border-[#adadad] bg-[#e1e1e1]">
                        <Svg><path d="M1 6h10v9H1z" fill="#fff" stroke="#555" /><path d="M1 11h6v4H1z" fill="#2a9ae0" /><path d="M11 8h4v7H7v-4z" fill="#fff" stroke="#111" /><path d="M8 7l5-5M10 3l3-2 2 2-2 3" stroke="#356" strokeWidth="1.500" /></Svg>
                    </button>
                </div>
            </fieldset>
            <fieldset className={`mt-1.5 pb-2.5 ${group}`}>
                <legend className={legend}>Data matching</legend>
                <p className="mt-[3px] pl-0.5">Assign the match between the drawing data to the external data using the following:</p>
                <div className="mt-1.5 flex items-end">
                    <div className="w-[210px]">
                        <label htmlFor="drawcol" className="mb-[5px] block pl-0.5">Drawing data column:</label>
                        <Combo id="drawcol" value="BUNDLE" width="w-[117px]" />
                    </div>
                    <div className="w-[126px]">
                        <label htmlFor="extcol" className="mb-[5px] block">External data column:</label>
                        <Combo id="extcol" value="Bundle" width="w-[117px]" />
                    </div>
                    <Btn width="w-[132px]" focus>Check Match</Btn>
                </div>
                <p className="mt-1.5 mb-[5px] pl-0.5">Matching options:</p>
                <div className="flex flex-col gap-2">
                    <Check label="Case sensitive" />
                    <Check label="Ignore prefix and suffix white space" />
                </div>
            </fieldset>
            <fieldset className={`mt-[9px] pb-2.5 ${group}`}>
                <legend className={legend}>Additional columns for data table</legend>
                <p className="mt-2 pl-0.5">Select external data columns to include:</p>
                <div className="mt-[7px] mb-1.5 flex h-[124px] w-[226px] border border-[#828790] bg-white p-px">
                    <div className="flex-1 pl-px">
                        {extColumns.map((c) => <Check key={c} label={c} on tight picked={c === 'Box'} />)}
                    </div>
                    <div className="ml-px flex w-[17px] flex-col items-center justify-between bg-[#f0f0f0] pt-1.5 pb-1.5">
                        <Scroll up />
                        <span className="mt-1 mb-auto h-[69px] w-[15px] bg-[#cdcdcd]" />
                        <Scroll />
                    </div>
                </div>
                <Check label="Use top row of external data as column names" on />
            </fieldset>
            <div className="mt-3 flex justify-end gap-2 pr-px">
                <Btn>OK</Btn>
                <Btn>Cancel</Btn>
                <Btn>Help</Btn>
            </div>
        </div>
    </div>
);

const columns = ['BUNDLE', 'HEADEND', 'L', 'LABEL', 'MB', 'MISC_PART1', 'MISC_PART2'];
const wideBtn = 'flex h-[22px] items-center gap-[3px] bg-[#e1e1e1] px-0.5';

const ExtractionDialog = () => (
    <div role="dialog" aria-label="Data Extraction" className={`absolute top-[386px] left-[910px] w-[651px] border border-[#9a9a9a] bg-[#f0f0f0] shadow-[0_4px_14px_rgba(0,0,0,0.45)] ${dialogFont}`}>
        <div className="flex h-[29px] items-center bg-white pr-4 pb-px pl-2 font-['Noto_Sans',sans-serif] text-[#999]">
            <RedA />
            <h2 className="ml-1 flex-1">Data Extraction - Refine Data (Page 5 of 8)</h2>
            <button type="button" aria-label="Minimize" className="h-px w-2.5 bg-[#ccc]" />
            <button type="button" aria-label="Maximize" className="mr-9 ml-9 h-2.5 w-2.5 border border-[#777]" />
            <button type="button" aria-label="Close"><CloseX /></button>
        </div>
        <div className="pt-[17px] pr-[13px] pb-4 pl-[7px]">
            <p className="pl-[3px] whitespace-nowrap">In this view you can reorder and sort columns, filter results, add formula columns, and create external data</p>
            <div className="mt-[31px] h-[204px] border border-black bg-[#f0f0f0]">
                <div className="flex h-[186px]">
                    <div className="min-w-0 flex-1 overflow-hidden bg-white">
                        <table className="w-[700px] table-fixed border-collapse">
                            <thead>
                                <tr className="h-[21px] border-b-2 border-[#a0a0a0]">
                                    {columns.map((c) => <th key={c} scope="col" className="w-[100px] border-r border-[#e0e0e0] p-0 pr-[17px] font-normal">{c}</th>)}
                                </tr>
                            </thead>
                            <tbody>
                                {[0, 1, 2, 3, 4, 5, 6, 7].map((r) => (
                                    <tr key={r} className="h-[22px]">
                                        {columns.map((c) => <td key={c} className="border-r border-b border-[#a0a0a0]" />)}
                                    </tr>
                                ))}
                            </tbody>
                        </table>
                    </div>
                    <div className="flex w-[17px] flex-col items-center pt-1.5 pb-1.5">
                        <Scroll up />
                        <span className="mt-1.5 mb-auto h-[38px] w-[15px] bg-[#cdcdcd]" />
                        <Scroll />
                    </div>
                </div>
                <div className="flex h-4 items-center justify-between pr-[21px]">
                    <span className="h-4 w-[368px] bg-[#cdcdcd]" />
                    <span className="-rotate-90"><Scroll /></span>
                </div>
            </div>
            <div className="mt-2 flex justify-between pr-px">
                <div className="flex flex-col gap-[9px] pt-0.5 pl-px">
                    <Check label="Combine identical rows" on />
                    <Check label="Show count column" on />
                    <Check label="Show name column" on />
                </div>
                <div className="flex w-[171px] flex-col gap-1.5">
                    <button type="button" className={`border-2 border-[#0078d7] ${wideBtn}`}>
                        <Svg><circle cx="7" cy="10" r="4" stroke="#4a6fa0" strokeWidth="1.500" /><circle cx="11" cy="6" r="4" stroke="#4a6fa0" strokeWidth="1.500" /><path d="M1 1l4 4M1 5V1h4" stroke="#222" /></Svg>
                        Link External Data...
                    </button>
                    <button type="button" className={`border border-[#adadad] ${wideBtn}`}>
                        <Svg><text x="1" y="7" fontSize="8" fontWeight="bold" fill="#357">A</text><text x="1" y="15" fontSize="9" fontWeight="bold" fill="#134">Z</text><path d="M11 2v12M9 11l2 3 3-3" stroke="#134" strokeWidth="1.500" /></Svg>
                        Sort Columns Options...
                    </button>
                    <button type="button" className={`border border-[#adadad] ${wideBtn}`}>
                        <Svg><path d="M5 1h7v13H1V5z" fill="#e6f0fa" stroke="#1f5f90" /><circle cx="9" cy="8" r="4" fill="#cfe4f6" stroke="#1f5f90" strokeWidth="1.500" /><path d="M12 11l3 4" stroke="#1f5f90" strokeWidth="2" /></Svg>
                        Full Preview...
                    </button>
                </div>
            </div>
            <hr className="mt-3 -mr-3 border-[#dcdcdc]" />
            <div className="mt-[11px] flex justify-end gap-2 pr-px">
                <Btn>&lt; Back</Btn>
                <Btn>Next &gt;</Btn>
                <Btn>Cancel</Btn>
            </div>
        </div>
        <svg viewBox="0 0 8 8" className="absolute right-0.5 bottom-0.5 h-2 w-2"><path d="M6 0h2v2H6zM3 3h2v2H3zM6 3h2v2H6zM0 6h2v2H0zM3 6h2v2H3zM6 6h2v2H6z" fill="#b8b8b8" /></svg>
    </div>
);

const CheckKeyDialog = () => (
    <div role="alertdialog" aria-label="Check Key" className="absolute top-[490px] left-[924px] w-[468px] border border-[#858585] bg-white font-['Noto_Sans',sans-serif] text-[11px] text-black shadow-[0_6px_18px_rgba(0,0,0,0.5)]">
        <div className="flex h-[30px] items-center justify-between pr-[9px] pb-px pl-2">
            <h2>Check Key</h2>
            <button type="button" aria-label="Close"><CloseX className="text-black" /></button>
        </div>
        <div className="flex h-[97px] gap-2 pt-[26px] pl-[25px]">
            <svg viewBox="0 0 32 32" className="h-8 w-8 shrink-0"><path d="M16 1l15 30H1z" fill="#ffe100" stroke="#f5b400" /><path d="M16 11v12M16 25v3" stroke="#111" strokeWidth="2" /></svg>
            <p className="leading-[15px] whitespace-nowrap">
                The following problem was found when matching the data columns:<br />
                No match was found between any values in the drawing data and<br />
                external data.
            </p>
        </div>
        <div className="flex h-[49px] justify-end bg-[#f0f0f0] pt-[13px] pr-5">
            <button type="button" className="h-6 w-[86px] border-2 border-[#0078d7] bg-[#e1e1e1]">OK</button>
        </div>
    </div>
);

/* ---------- status bar ---------- */

const B = '#2e8ff0';
const G = '#c8c8c8';

const Cell = ({ children, width }: { children: ReactNode; width: string }) => (
    <div className={`flex h-[26px] shrink-0 items-center justify-around border border-[#7a7a7a] bg-[#4f4f4f] ${width}`}>{children}</div>
);

const Person = ({ color, extra }: { color: string; extra?: ReactNode }) => (
    <Svg><path d="M8 1l2 6 6 7-5-1-3-3-3 3-5 1 6-7z" fill={color} />{extra}</Svg>
);

const StatusBar = () => (
    <footer className="flex h-[29px] justify-between border-t border-[#555] bg-[#373737] text-[11px]">
        <nav className="flex pl-4">
            <a href="#model" className="flex h-[17px] w-[50px] items-center justify-center rounded-b-lg bg-linear-to-b from-[#5c5c5c] to-[#8a8a8a] font-bold text-white">Model</a>
            <a href="#layout1" className="ml-1 flex h-[17px] w-[63px] items-center justify-center rounded-b-lg bg-[#505050] text-[#bdbdbd]">Layout1</a>
            <button type="button" aria-label="New layout" className="ml-1.5 grid h-4 w-[22px] place-items-center rounded-tl-lg rounded-br-lg bg-[#505050]">
                <svg viewBox="0 0 8 8" className="h-2 w-2"><path d="M4 0v8M0 4h8" stroke="#ccc" strokeWidth="2" /></svg>
            </button>
        </nav>
        <div className="flex gap-px text-white">
            <Cell width="w-12">MODEL</Cell>
            <Cell width="w-[65px]">
                <Svg><path d="M2 1v14M6 1v14M10 1v14M14 1v14M1 4h14M1 8h14M1 12h14" stroke={B} /></Svg>
                <Svg><path d="M1 2h14M1 6h14M1 10h14M1 14h14" stroke={B} strokeDasharray="1 2" strokeWidth="1.500" /></Svg>
                <Caret className="text-white" />
            </Cell>
            <Cell width="w-[26px]"><Svg><path d="M4 1v8M0 5h8" stroke={G} /><rect x="6" y="10" width="10" height="4" rx="1" fill={G} /></Svg></Cell>
            <Cell width="w-[102px]">
                <Svg><path d="M2 2v12h13M2 10h4v4" stroke={G} strokeWidth="1.500" /></Svg>
                <Svg><circle cx="7" cy="8" r="6" stroke={B} strokeWidth="1.500" /><path d="M7 8h9M7 8l6-6" stroke={B} strokeWidth="1.500" /></Svg>
                <Caret className="text-white" />
                <Svg><path d="M1 1l14 14M10 1v14" stroke={G} /></Svg>
                <Caret className="text-white" />
            </Cell>
            <Cell width="w-[65px]">
                <Svg><path d="M15 14H1L14 2" stroke={B} strokeWidth="1.500" /><circle cx="7" cy="9" r="2" fill={B} /></Svg>
                <Svg><path d="M3 3h11v11H3z" stroke={B} strokeWidth="1.500" /><path d="M0 0h5v5H0z" fill="#1fc41f" stroke="#053" /></Svg>
                <Caret className="text-white" />
            </Cell>
            <Cell width="w-[154px]">
                <Person color={B} extra={<circle cx="12" cy="4" r="3" stroke={B} strokeWidth="1.500" />} />
                <Person color={G} extra={<path d="M13 1l-3 4h3l-2 4" stroke={G} strokeWidth="1.500" />} />
                <Person color={G} />
                <span>1/8" = 1'-0"</span>
                <Caret className="text-white" />
            </Cell>
            <Cell width="w-10">
                <Svg><circle cx="8" cy="8" r="4" stroke={G} strokeWidth="3" /><circle cx="8" cy="8" r="6" stroke={G} strokeWidth="2" strokeDasharray="2.500 2.200" /></Svg>
                <Caret className="text-white" />
            </Cell>
            <Cell width="w-[25px]"><Svg><path d="M8 1v14M1 8h14" stroke={G} strokeWidth="2" /></Svg></Cell>
            <Cell width="w-[25px]"><Svg><path d="M1 1h6v7H1zM7 9l4 6H3z" stroke={G} /><circle cx="12" cy="6" r="3" stroke={G} /></Svg></Cell>
            <Cell width="w-[25px]"><Svg><circle cx="8" cy="8" r="7" fill="#1b5fae" stroke={B} strokeWidth="1.500" /><path d="M6 11l3 0 4-6" stroke={B} /></Svg></Cell>
            <Cell width="w-[43px]">
                <Svg><path d="M2 1h7l4 4v4H2z" fill="#cfe0f0" stroke="#246" /><path d="M1 9h9v5H1z" fill="#f0d030" /><path d="M7 12l3 3 5-7" stroke="#2faa2f" strokeWidth="2" /></Svg>
                <Svg><circle cx="4" cy="4" r="3" stroke="#d0642a" strokeWidth="1.500" /><circle cx="12" cy="12" r="3" stroke="#d0642a" strokeWidth="1.500" /><path d="M5 5l6 6" stroke="#d0642a" strokeWidth="1.500" /></Svg>
            </Cell>
            <Cell width="w-[51px]">
                <Svg><path d="M1 2h14v12H1zM3 12l4-4M3 9v3h3M13 4l-4 4M10 4h3v3" stroke={G} /></Svg>
                <Svg><path d="M1 3h14M1 8h14M1 13h14" stroke={G} strokeWidth="2" /></Svg>
            </Cell>
        </div>
    </footer>
);

/* ---------- Windows taskbar ---------- */

const apps: { name: string; art: ReactNode; state?: 'open' | 'active' }[] = [
    { name: 'File Explorer', state: 'open', art: <><path d="M1 3h8l2 2h11v15H1z" fill="#fbe08a" /><path d="M1 3h8l1 2H1z" fill="#f0b92e" /><path d="M5 21v-8h14v8h-4v-4H9v4z" fill="#3bb3e8" /></> },
    { name: 'Chrome', state: 'open', art: <><circle cx="12" cy="12" r="11" fill="#fdd23c" /><path d="M2 7a11 11 0 0120 0H12a5 5 0 00-4 3z" fill="#e0463a" /><path d="M2 7a11 11 0 009 16l4-7a5 5 0 01-7-2z" fill="#2fa552" /><circle cx="12" cy="12" r="5" fill="#fff" /><circle cx="12" cy="12" r="4" fill="#4a8af4" /></> },
    { name: 'Origin', art: <><circle cx="12" cy="12" r="6" stroke="#ee5a24" strokeWidth="6" /><path d="M4 8c1-4 4-7 8-8l-1 4zM20 16c-1 4-4 7-8 8l1-4z" fill="#ee5a24" /></> },
    { name: 'Bitdefender', art: <><rect width="24" height="24" rx="3" fill="#dc0000" /><text x="12" y="18" fontSize="17" fontWeight="bold" textAnchor="middle" fontFamily="Liberation Serif, serif" fill="#fff">B</text></> },
    { name: 'Nvidia', art: <><path d="M2 2h20v20H2z" fill="#1a1a1a" stroke="#888" /><path d="M21 7C14 8 10 12 9 16l3 3c1-4 4-6 9-8M21 13c-3 1-5 4-5 7M3 18l5 3" stroke="#999" strokeWidth="2" /></> },
    { name: 'Firefox', art: <><circle cx="13" cy="11" r="10" fill="#2b7fc4" /><path d="M2 4c2 2 3 2 5 2l3 3-3 3c2 4 7 4 10 1 3-4 1-8-1-10 7 3 8 9 6 13-3 7-12 9-17 4C0 16 0 9 2 4z" fill="#ef6a22" /><path d="M20 6c4 7 0 14-6 16 7 0 10-9 6-16z" fill="#f7c52f" /></> },
    { name: 'Notepad++', art: <><path d="M2 2h19v21H2z" fill="#f4f4f4" stroke="#aaa" /><path d="M3 13h17v9H3z" fill="#7ccf2f" /><path d="M6 6v9M9 8v4M11 8h3" stroke="#333" strokeWidth="1.500" /><path d="M22 2l-7 14" stroke="#f0b020" strokeWidth="3" /></> },
    { name: 'Spotify', state: 'open', art: null },
    { name: 'Eclipse', art: <><circle cx="11" cy="12" r="11" fill="#f7941e" /><circle cx="13.500" cy="12" r="11" fill="#000" /><circle cx="14" cy="12" r="10" fill="#2c2255" /><path d="M4 9h20M4 12h20M4 15h20" stroke="#fff" strokeWidth="1.500" /></> },
    { name: 'Excel', state: 'open', art: <><path d="M1 1h18l4 4v18H1z" fill="#e8f4e8" stroke="#8c8" /><path d="M14 9h8v12h-8z" fill="#fff" stroke="#4a4" /><path d="M3 4l12 15M15 4L4 19" stroke="#1f8a3a" strokeWidth="4" /></> },
    { name: 'AutoCAD', state: 'active', art: <><rect width="24" height="24" fill="#fbe4de" /><text x="12" y="20" fontSize="22" fontWeight="bold" textAnchor="middle" fontFamily="Liberation Sans, sans-serif" fill="#b51f24">A</text></> },
    { name: 'Parallels', art: <><rect x="1" width="22" height="23" rx="4" fill="#4b4448" /><path d="M1 7V3a3 3 0 013-3h16a3 3 0 013 3v4z" fill="#e8304a" /><text x="12" y="6" fontSize="5" textAnchor="middle" fontFamily="Liberation Sans, sans-serif" fill="#fff">Parallels</text><path d="M14 9h5v11l-9 1 4-4z" fill="#eee" /></> },
    { name: 'V', art: <><circle cx="12" cy="12" r="10.500" fill="#1fb5ac" stroke="#dff" /><path d="M8 7l4 10 4-10h-3" stroke="#fff" strokeWidth="1.500" /></> },
    { name: 'Python', art: <><path d="M2 1h15v20H2z" fill="#eee" stroke="#999" /><path d="M4 5h11M4 8h11M4 11h7" stroke="#555" /><path d="M12 10h6q2 0 2 3v3h-6v3h-4v-6h3z" fill="#3c78aa" /><path d="M14 24h6q3 0 3-4v-3h-3v3h-6z" fill="#f7cb3f" /></> },
    { name: 'Opera', art: <ellipse cx="12" cy="12" rx="8" ry="9" stroke="#f01c2c" strokeWidth="5" /> },
    { name: 'PyCharm', art: <><path d="M1 1h22v22H1z" fill="#21d789" /><path d="M14 1h9v12z" fill="#e8f04a" /><path d="M23 12v11H10z" fill="#10a8e0" /><rect x="4" y="4" width="16" height="16" fill="#000" /><text x="12" y="13" fontSize="9" fontWeight="bold" textAnchor="middle" fontFamily="Liberation Sans, sans-serif" fill="#fff">PC</text><path d="M6 17h6" stroke="#fff" /></> },
];

const Taskbar = () => (
    <div className="flex h-10 bg-black text-white">
        <button type="button" aria-label="Start" className="grid w-12 place-items-center">
            <Svg><path d="M0 2.200L6.500 1.300v6.200H0zM7.300 1.200L16 0v7.500H7.300zM0 8.400h6.500v6.300L0 13.800zM7.300 8.400H16V16l-8.700-1.200z" fill="#fff" /></Svg>
        </button>
        <input aria-label="Search Windows" placeholder="Search Windows" className="w-[344px] bg-[#333] px-2 text-sm placeholder:text-[#9a9a9a]" />
        <button type="button" aria-label="Task view" className="grid w-[50px] place-items-center">
            <Svg box="0 0 20 16" size="h-4 w-5"><path d="M4.500 1.500h11v13h-11zM3 3.500H.5v9H3M17 3.500h2.500v9H17" stroke="#fff" /></Svg>
        </button>
        {apps.map((a) => (
            <button key={a.name} type="button" aria-label={a.name} className={`relative grid w-[49px] place-items-center ${a.state === 'active' ? 'bg-[#333]' : ''}`}>
                {a.name === 'Spotify' ? <FaSpotify className="h-[22px] w-[22px] text-[#1ed760]" /> : <Svg box="0 0 24 24" size="h-6 w-6">{a.art}</Svg>}
                {a.state && <span className={`absolute bottom-0 h-0.5 bg-[#b4b4b4] ${a.state === 'active' ? 'w-full' : 'w-10'}`} />}
            </button>
        ))}
        <div className="ml-auto flex items-center text-[11px]">
            <svg viewBox="0 0 12 8" className="h-2 w-3" fill="none"><path d="M1 7l5-6 5 6" stroke="#fff" strokeWidth="1.300" /></svg>
            <Svg size="ml-2.5 h-4 w-4"><path d="M4 1l4 2-4 3-4-3zM12 1l4 2-4 3-4-3zM4 6l4 2-4 3-4-2zM12 6l4 2-4 3-4-2z" fill="#fff" /><circle cx="11" cy="11" r="4.500" fill="#2fae3c" /><path d="M9 11l2 2 3-4" stroke="#fff" /></Svg>
            <Svg size="ml-2 h-4 w-4"><path d="M5.500 4.500h10v8h-8M2 1v3M5 1v3M.5 4.500h6v3h-6zM3.500 8v5" stroke="#fff" /><path d="M8 7h3v4H8z" fill="#fff" /></Svg>
            <Svg size="ml-2.5 h-4 w-4"><path d="M2 15C2 8 8 2 15 2M5 15c0-5 5-10 10-10M8 15c0-4 3-7 7-7M11 15c0-2 2-4 4-4" stroke="#ddd" /><circle cx="14" cy="14" r="1.500" fill="#fff" /></Svg>
            <Svg size="ml-1.5 h-4 w-4"><path d="M1 6h3l4-4v12l-4-4H1z" stroke="#fff" /><path d="M10 5q2 3 0 6M12 3q4 5 0 10" stroke="#ccc" /></Svg>
            <time className="ml-3 w-[50px] text-center leading-[18px]">2:51 PM<br />8/2/2017</time>
            <span className="relative mr-5 ml-5">
                <Svg box="0 0 16 16" size="h-4 w-4"><path d="M0 1h16v11h-4v4l-4-4H0z" fill="#fff" /><path d="M3 4h10M3 6.500h10M3 9h7" stroke="#000" /></Svg>
                <span className="absolute -right-2 -bottom-2 grid h-3.5 w-3.5 place-items-center rounded-full border border-[#888] bg-[#222] font-bold">2</span>
            </span>
            <span className="mr-1 h-10 w-px bg-[#555]" />
        </div>
    </div>
);

const App = () => (
    <div className="relative flex h-screen flex-col overflow-hidden bg-[#5c5c5c] font-['Noto_Sans','Open_Sans',sans-serif] leading-4">
        <TitleBar />
        <Ribbon />
        <FileTabs />
        <div className="flex min-h-0 flex-1">
            <SideBar label="Sheet Set Manager" className="mt-[5px] mr-[3px] mb-1 ml-px gap-[355px]" />
            <Properties />
            <div className="w-px" />
            <Canvas />
            <div className="flex w-[25px] flex-col items-end gap-2 pt-[5px] pr-px pb-1">
                <SideBar label="External References" className="flex-1 gap-[146px]" />
                <SideBar label="DesignCenter" className="flex-1 gap-[161px]" />
            </div>
        </div>
        <StatusBar />
        <Taskbar />

        <ExtractionDialog />
        <LinkDialog />
        <CheckKeyDialog />

        <button type="button" aria-label="Application menu" className="absolute top-0 left-0 flex h-[41px] w-[41px] items-center border border-black bg-linear-to-b from-[#c9c9c9] to-[#7d7d7d] pl-0.5">
            <svg viewBox="0 0 28 32" className="h-8 w-7 overflow-visible">
                <defs><linearGradient id="logo" x1="0" x2="1"><stop offset="0" stopColor="#e8474a" /><stop offset="1" stopColor="#9c1218" /></linearGradient></defs>
                <text x="14" y="26" textAnchor="middle" fontFamily="Liberation Sans, sans-serif" fontWeight="bold" fontSize="36" fill="url(#logo)">A</text>
            </svg>
            <Caret className="text-[#333]" />
        </button>
    </div>
);

export default App;
